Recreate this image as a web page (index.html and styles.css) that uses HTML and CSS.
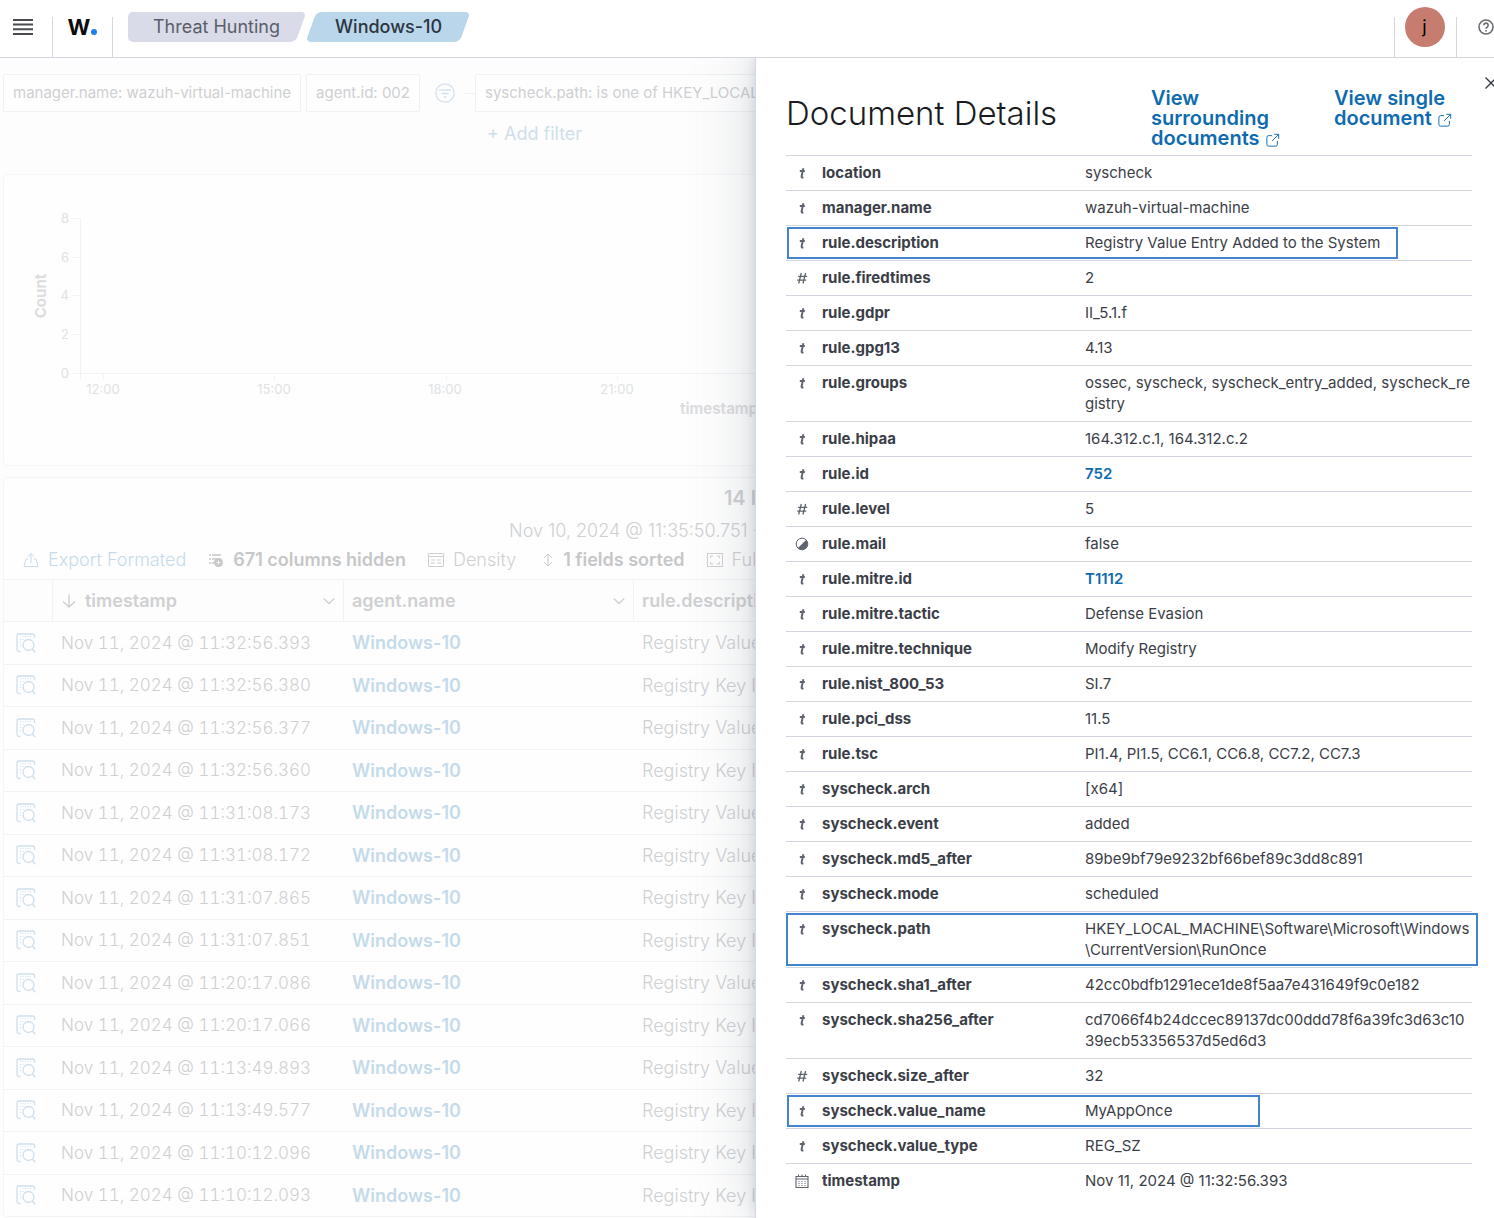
FILE: index.html
```html
<!DOCTYPE html>
<html lang="en">
<head>
<meta charset="utf-8">
<meta name="viewport" content="width=device-width, initial-scale=1">
<title>Threat Hunting - Windows-10</title>
<link rel="stylesheet" href="styles.css">
</head>
<body>
<svg class="sprite" aria-hidden="true">
  <symbol id="i-popout" viewBox="0 0 16 16"><path d="M7 3H3a2 2 0 0 0-2 2v8a2 2 0 0 0 2 2h8a2 2 0 0 0 2-2V9M9.500 1.500h5v5M14.500 1.500 7 9" fill="none" stroke="currentColor" stroke-width="1.100"/></symbol>
  <symbol id="i-string" viewBox="0 0 16 16"><path d="M9.400 3.200 7.600 11.200q-.4 1.700 1.800 1.100M5.800 6h5" fill="none" stroke="currentColor" stroke-width="1.900"/></symbol>
  <symbol id="i-number" viewBox="0 0 16 16"><path d="M7.300 3 4.700 13.500M11.600 3 9 13.500M4.200 6.300h9M3.200 10.200h9" fill="none" stroke="currentColor" stroke-width="1.300"/></symbol>
  <symbol id="i-boolean" viewBox="0 0 16 16"><circle cx="8" cy="8" r="5.800" fill="none" stroke="currentColor" stroke-width="1"/><path d="M12.100 3.900A5.800 5.800 0 0 1 3.900 12.100Z" fill="currentColor"/></symbol>
  <symbol id="i-date" viewBox="0 0 16 16"><path d="M2 3.500h12v11H2zM2 6h12M4.500 1.500v2M8 1.500v2M11.500 1.500v2" fill="none" stroke="currentColor" stroke-width="1.100"/><path d="M4.500 8.500h7M4.500 10.500h7M4.500 12.500h7" fill="none" stroke="currentColor" stroke-dasharray="1 2"/></symbol>
  <symbol id="i-inspect" viewBox="0 0 20 20"><path d="M4.500 18.500H3a2 2 0 0 1-2-2V3a2 2 0 0 1 2-2h13.500a2 2 0 0 1 2 2v2" fill="none" stroke="currentColor" stroke-width="1.300"/><path d="M4 3.600h12M4 6.500h4M4 9.500h2M4 12.500h2" fill="none" stroke="currentColor" stroke-dasharray="1 1.500"/><circle cx="12.500" cy="12" r="5.500" fill="none" stroke="currentColor" stroke-width="1.300"/><path d="m16.300 16 3 3.300" stroke="currentColor" stroke-width="1.400"/></symbol>
  <symbol id="i-chevron" viewBox="0 0 12 12"><path d="m.7 3.500 5.300 5 5.300-5" fill="none" stroke="currentColor" stroke-width="1.300"/></symbol>
</svg>

<header class="topbar">
  <button class="menu" aria-label="Toggle navigation"><svg width="20" height="16" viewBox="0 0 20 16"><path d="M0 1h20M0 5.500h20M0 10.200h20M0 15h20" stroke="#4a4c52" stroke-width="2"/></svg></button>
  <a class="logo" href="#" aria-label="Wazuh">W<span class="dot"></span></a>
  <nav class="crumbs" aria-label="Breadcrumbs">
    <a class="crumb crumb-first" href="#"><span>Threat Hunting</span></a>
    <a class="crumb crumb-last" href="#" aria-current="page"><span>Windows-10</span></a>
  </nav>
  <button class="account" aria-label="Account menu"><span class="avatar">j</span></button>
  <button class="help" aria-label="Help"><svg width="16" height="16" viewBox="0 0 16 16"><circle cx="8" cy="8" r="7" fill="none" stroke="#6a6c72" stroke-width="1.600"/><path d="M5.800 6.300a2.200 2.200 0 1 1 3.300 1.900Q8 8.800 8 9.800M8 11v1.600" fill="none" stroke="#6a6c72" stroke-width="1.600"/></svg></button>
</header>

<div class="layout">
<main class="pane">
<div class="workspace">
  <div class="filters">
    <span class="pill">manager.name: wazuh-virtual-machine</span>
    <span class="pill">agent.id: 002</span>
    <button class="filter-menu" aria-label="Filter options"><svg width="20" height="20" viewBox="0 0 20 20"><circle cx="10" cy="10" r="9.200" fill="none" stroke="currentColor" stroke-width="1.300"/><path d="M4 7h12M6.500 10.400h7M8.800 13.800h2.400" stroke="currentColor" stroke-width="1.500"/></svg></button>
    <span class="dash"></span>
    <span class="pill">syscheck.path: is one of HKEY_LOCAL_MACHINE</span>
  </div>
  <button class="add-filter">+ Add filter</button>

  <section class="panel chart" aria-label="Events over time">
    <svg width="100%" height="290">
      <g class="axis">
        <path d="M76.500 43V199M69 43.500h8M69 82.500h8M69 120.500h8M69 159.500h8M69 198.500h1430M76.500 198v6M99.500 198v6M270.500 201v4M442.500 201v4M613.500 201v4"/>
      </g>
      <g class="ticks end"><text x="65" y="48">8</text><text x="65" y="87">6</text><text x="65" y="125">4</text><text x="65" y="164">2</text><text x="65" y="203">0</text></g>
      <g class="ticks mid"><text x="99" y="219">12:00</text><text x="270" y="219">15:00</text><text x="441" y="219">18:00</text><text x="613" y="219">21:00</text></g>
      <text class="axis-title" transform="translate(42 121) rotate(-90)">Count</text>
      <text class="axis-title" x="715" y="239">timestamp</text>
    </svg>
  </section>

  <section class="panel" aria-label="Events">
    <h2 class="hits">14 hits</h2>
    <p class="range">Nov 10, 2024 @ 11:35:50.751 - Nov 11, 2024 @ 11:35:50.751</p>
    <div class="toolbar">
      <button class="tool tool-link"><svg width="16" height="16" viewBox="0 0 16 16"><path d="M5 7H3L1 14.500h14L13 7h-2M8 11V2M5 4.500 8 1.500l3 3" fill="none" stroke="currentColor"/></svg>Export Formated</button>
      <button class="tool tool-on"><svg width="16" height="16" viewBox="0 0 16 16"><path d="M1 3h2M1 7h2M1 11h2M4 3h9M4 7h5M4 11h2" stroke="currentColor" stroke-width="1.300"/><circle cx="10.500" cy="10.500" r="4.500" fill="currentColor"/><path d="M8.500 10.500h4M10.500 8.500v4" stroke="#fefefe"/></svg>671 columns hidden</button>
      <button class="tool"><svg width="16" height="16" viewBox="0 0 16 16"><path d="M.5 1.500h15v13H.5zM.5 4.500h15M3 8h4M9 8h4M3 11h4M9 11h4" fill="none" stroke="currentColor"/></svg>Density</button>
      <button class="tool tool-on tool-sort"><svg width="12" height="16" viewBox="0 0 12 16"><path d="M6 2v12M2 6 6 2l4 4M2 10l4 4 4-4" fill="none" stroke="currentColor"/></svg>1 fields sorted</button>
      <button class="tool"><svg width="16" height="16" viewBox="0 0 16 16"><path d="M.5 1.500h15v13H.5zM3.500 6V4h2.500M10 4h2.500v2M12.500 10v2H10M6 12H3.500v-2" fill="none" stroke="currentColor"/></svg>Full screen</button>
    </div>
    <table class="events">
      <colgroup><col class="c-icon"><col class="c-time"><col class="c-agent"><col></colgroup>
      <thead><tr>
        <th></th>
        <th><div class="head"><svg width="16" height="16" viewBox="0 0 16 16"><path d="M8 1.500v12.500M2 8.500 8 14l6-5.500" fill="none" stroke="currentColor" stroke-width="1.400"/></svg><span>timestamp</span><svg class="caret" width="12" height="12"><use href="#i-chevron"/></svg></div></th>
        <th><div class="head"><span>agent.name</span><svg class="caret" width="12" height="12"><use href="#i-chevron"/></svg></div></th>
        <th><div class="head"><span>rule.description</span></div></th>
      </tr></thead>
      <tbody>
        <tr><td><svg class="inspect"><use href="#i-inspect"/></svg></td><td class="time">Nov 11, 2024 @ 11:32:56.393</td><td><a href="#">Windows-10</a></td><td>Registry Value Entry</td></tr>
        <tr><td><svg class="inspect"><use href="#i-inspect"/></svg></td><td class="time">Nov 11, 2024 @ 11:32:56.380</td><td><a href="#">Windows-10</a></td><td>Registry Key Integrity</td></tr>
        <tr><td><svg class="inspect"><use href="#i-inspect"/></svg></td><td class="time">Nov 11, 2024 @ 11:32:56.377</td><td><a href="#">Windows-10</a></td><td>Registry Value Entry</td></tr>
        <tr><td><svg class="inspect"><use href="#i-inspect"/></svg></td><td class="time">Nov 11, 2024 @ 11:32:56.360</td><td><a href="#">Windows-10</a></td><td>Registry Key Integrity</td></tr>
        <tr><td><svg class="inspect"><use href="#i-inspect"/></svg></td><td class="time">Nov 11, 2024 @ 11:31:08.173</td><td><a href="#">Windows-10</a></td><td>Registry Value Entry</td></tr>
        <tr><td><svg class="inspect"><use href="#i-inspect"/></svg></td><td class="time">Nov 11, 2024 @ 11:31:08.172</td><td><a href="#">Windows-10</a></td><td>Registry Value Entry</td></tr>
        <tr><td><svg class="inspect"><use href="#i-inspect"/></svg></td><td class="time">Nov 11, 2024 @ 11:31:07.865</td><td><a href="#">Windows-10</a></td><td>Registry Key Integrity</td></tr>
        <tr><td><svg class="inspect"><use href="#i-inspect"/></svg></td><td class="time">Nov 11, 2024 @ 11:31:07.851</td><td><a href="#">Windows-10</a></td><td>Registry Key Integrity</td></tr>
        <tr><td><svg class="inspect"><use href="#i-inspect"/></svg></td><td class="time">Nov 11, 2024 @ 11:20:17.086</td><td><a href="#">Windows-10</a></td><td>Registry Value Entry</td></tr>
        <tr><td><svg class="inspect"><use href="#i-inspect"/></svg></td><td class="time">Nov 11, 2024 @ 11:20:17.066</td><td><a href="#">Windows-10</a></td><td>Registry Key Integrity</td></tr>
        <tr><td><svg class="inspect"><use href="#i-inspect"/></svg></td><td class="time">Nov 11, 2024 @ 11:13:49.893</td><td><a href="#">Windows-10</a></td><td>Registry Value Entry</td></tr>
        <tr><td><svg class="inspect"><use href="#i-inspect"/></svg></td><td class="time">Nov 11, 2024 @ 11:13:49.577</td><td><a href="#">Windows-10</a></td><td>Registry Key Integrity</td></tr>
        <tr><td><svg class="inspect"><use href="#i-inspect"/></svg></td><td class="time">Nov 11, 2024 @ 11:10:12.096</td><td><a href="#">Windows-10</a></td><td>Registry Key Integrity</td></tr>
        <tr><td><svg class="inspect"><use href="#i-inspect"/></svg></td><td class="time">Nov 11, 2024 @ 11:10:12.093</td><td><a href="#">Windows-10</a></td><td>Registry Key Integrity</td></tr>
      </tbody>
    </table>
  </section>
</div>
</main>

<aside class="flyout" aria-label="Document Details">
  <button class="close" aria-label="Close"><svg width="12" height="12" viewBox="0 0 12 12"><path d="m.5.5 11 11M11.500.5l-11 11" stroke="#343741" stroke-width="1.300"/></svg></button>
  <div class="flyout-head">
    <h1>Document Details</h1>
    <a href="#">View surrounding documents <svg width="14" height="14"><use href="#i-popout"/></svg></a>
    <a href="#">View single document <svg width="14" height="14"><use href="#i-popout"/></svg></a>
  </div>
  <table class="fields">
    <colgroup><col class="f-type"><col class="f-name"><col></colgroup>
    <tbody>
      <tr><td><svg><use href="#i-string"/></svg></td><th scope="row">location</th><td>syscheck</td></tr>
      <tr><td><svg><use href="#i-string"/></svg></td><th scope="row">manager.name</th><td>wazuh-virtual-machine</td></tr>
      <tr class="mark mark-wide"><td><svg><use href="#i-string"/></svg></td><th scope="row">rule.description</th><td>Registry Value Entry Added to the System</td></tr>
      <tr><td><svg><use href="#i-number"/></svg></td><th scope="row">rule.firedtimes</th><td>2</td></tr>
      <tr><td><svg><use href="#i-string"/></svg></td><th scope="row">rule.gdpr</th><td>II_5.1.f</td></tr>
      <tr><td><svg><use href="#i-string"/></svg></td><th scope="row">rule.gpg13</th><td>4.13</td></tr>
      <tr><td><svg><use href="#i-string"/></svg></td><th scope="row">rule.groups</th><td>ossec, syscheck, syscheck_entry_added, syscheck_registry</td></tr>
      <tr><td><svg><use href="#i-string"/></svg></td><th scope="row">rule.hipaa</th><td>164.312.c.1, 164.312.c.2</td></tr>
      <tr><td><svg><use href="#i-string"/></svg></td><th scope="row">rule.id</th><td><a href="#">752</a></td></tr>
      <tr><td><svg><use href="#i-number"/></svg></td><th scope="row">rule.level</th><td>5</td></tr>
      <tr><td><svg><use href="#i-boolean"/></svg></td><th scope="row">rule.mail</th><td>false</td></tr>
      <tr><td><svg><use href="#i-string"/></svg></td><th scope="row">rule.mitre.id</th><td><a href="#">T1112</a></td></tr>
      <tr><td><svg><use href="#i-string"/></svg></td><th scope="row">rule.mitre.tactic</th><td>Defense Evasion</td></tr>
      <tr><td><svg><use href="#i-string"/></svg></td><th scope="row">rule.mitre.technique</th><td>Modify Registry</td></tr>
      <tr><td><svg><use href="#i-string"/></svg></td><th scope="row">rule.nist_800_53</th><td>SI.7</td></tr>
      <tr><td><svg><use href="#i-string"/></svg></td><th scope="row">rule.pci_dss</th><td>11.5</td></tr>
      <tr><td><svg><use href="#i-string"/></svg></td><th scope="row">rule.tsc</th><td>PI1.4, PI1.5, CC6.1, CC6.8, CC7.2, CC7.3</td></tr>
      <tr><td><svg><use href="#i-string"/></svg></td><th scope="row">syscheck.arch</th><td>[x64]</td></tr>
      <tr><td><svg><use href="#i-string"/></svg></td><th scope="row">syscheck.event</th><td>added</td></tr>
      <tr><td><svg><use href="#i-string"/></svg></td><th scope="row">syscheck.md5_after</th><td>89be9bf79e9232bf66bef89c3dd8c891</td></tr>
      <tr><td><svg><use href="#i-string"/></svg></td><th scope="row">syscheck.mode</th><td>scheduled</td></tr>
      <tr class="mark mark-full"><td><svg><use href="#i-string"/></svg></td><th scope="row">syscheck.path</th><td>HKEY_LOCAL_MACHINE\Software\Microsoft\Windows\CurrentVersion\RunOnce</td></tr>
      <tr><td><svg><use href="#i-string"/></svg></td><th scope="row">syscheck.sha1_after</th><td>42cc0bdfb1291ece1de8f5aa7e431649f9c0e182</td></tr>
      <tr><td><svg><use href="#i-string"/></svg></td><th scope="row">syscheck.sha256_after</th><td>cd7066f4b24dccec89137dc00ddd78f6a39fc3d63c1039ecb53356537d5ed6d3</td></tr>
      <tr><td><svg><use href="#i-number"/></svg></td><th scope="row">syscheck.size_after</th><td>32</td></tr>
      <tr class="mark mark-short"><td><svg><use href="#i-string"/></svg></td><th scope="row">syscheck.value_name</th><td>MyAppOnce</td></tr>
      <tr><td><svg><use href="#i-string"/></svg></td><th scope="row">syscheck.value_type</th><td>REG_SZ</td></tr>
      <tr><td><svg><use href="#i-date"/></svg></td><th scope="row">timestamp</th><td>Nov 11, 2024 @ 11:32:56.393</td></tr>
    </tbody>
  </table>
</aside>
</div>
</body>
</html>
```
FILE: styles.css
```css
*, *::before, *::after { box-sizing: border-box; }
body {
  margin: 0;
  min-height: 100vh;
  display: flex;
  flex-direction: column;
  background: #fff;
  color: #3b3e47;
  font-family: Inter, "Liberation Sans", sans-serif;
  font-size: 15px;
  overflow-x: hidden;
}
button { font: inherit; color: inherit; background: none; border: 0; padding: 0; margin: 0; text-align: left; }
a { text-decoration: none; }
h1, h2, p { margin: 0; }
svg { flex: none; }
.sprite { position: absolute; width: 0; height: 0; }

/* top bar */
.topbar { display: flex; align-items: flex-end; height: 58px; border-bottom: 1px solid #d3d6df; }
.menu { display: flex; justify-content: center; align-items: flex-start; width: 52px; height: 40px; padding: 2px 6px 0 0; }
.logo { display: flex; align-items: flex-start; justify-content: center; gap: 1px; height: 40px; width: 61px; border: solid #d3d6df; border-width: 0 1px; color: #0b0b0b; font-size: 22px; font-weight: 700; line-height: 20px; }
.dot { width: 6px; height: 6px; margin-top: 12px; border-radius: 50%; background: #1d7ff0; }
.crumbs { display: flex; align-self: flex-start; gap: 10px; flex: 1; padding: 12px 0 0 15px; font-size: 18px; line-height: 30px; }
.crumb { position: relative; color: #5a5e69; }
.crumb span { position: relative; }
.crumb::before, .crumb-first::after { content: ""; position: absolute; inset: 0; border-radius: 5px; background: #d9dce8; }
.crumb::before { transform: skewX(-20deg); }
.crumb-first { padding: 0 21px 0 25px; }
.crumb-first::before { left: 20px; }
.crumb-first::after { right: 20px; }
.crumb-first span { z-index: 1; }
.crumb-last { padding: 0 23px 0 24px; color: #2b3440; }
.crumb-last span { font-weight: 500; }
.crumb-last::before { background: #b9d6ea; }
.account { display: flex; justify-content: center; width: 63px; height: 40px; padding-right: 2px; border: solid #d3d6df; border-width: 0 1px; }
.avatar { width: 40px; height: 40px; margin-top: -10px; border-radius: 50%; background: #c67c6f; color: #000; font-size: 18px; line-height: 40px; text-align: center; }
.help { display: flex; width: 37px; height: 40px; padding: 2px 0 0 21px; }

.layout { flex: 1; display: grid; grid-template-columns: 755fr 739fr; }

/* dimmed background page */
.pane { min-width: 0; overflow: hidden; background: #fdfdfd; color: #cfd0d2; font-size: 18px; }
.workspace { width: 200%; padding: 16px 3px 0; }
.filters { display: flex; align-items: center; gap: 5px; font-size: 15px; }
.pill { height: 38px; padding: 0 9px; border: 1px solid #eff1f3; border-radius: 2px; background: #fefefe; line-height: 36px; white-space: nowrap; }
.filter-menu { display: flex; margin: 0 5px 0 10px; color: #d5e2ed; }
.dash { width: 10px; height: 1px; margin-right: -5px; background: #eff1f3; }
.add-filter { display: block; margin: 12px 0 30px 484px; line-height: 20px; color: #cfdfea; }
.panel { border: 1px solid #f3f5f6; border-radius: 4px; background: #fefefe; }
.chart { margin-bottom: 11px; }
.chart svg { display: block; }
.axis { fill: none; stroke: #f1f2f3; }
.ticks { fill: #e0e2e3; font-size: 13px; }
.end { text-anchor: end; }
.mid { text-anchor: middle; }
.axis-title { fill: #dcdddf; font-size: 15px; font-weight: 700; text-anchor: middle; }
.hits { margin-top: 5px; font-size: 20px; font-weight: 600; line-height: 30px; text-align: center; }
.range { line-height: 36px; text-align: center; font-weight: 300; }
.toolbar { display: flex; gap: 22px; height: 30px; padding-left: 19px; line-height: 22px; font-weight: 300; white-space: nowrap; }
.tool { display: flex; align-items: center; gap: 9px; height: 22px; }
.tool-link { color: #c5dbea; }
.tool-on { font-weight: 600; color: #c6c7c9; }
.tool-sort { padding-left: 4px; }
.events { width: 100%; table-layout: fixed; border-collapse: separate; border-spacing: 0; }
.c-icon { width: 49px; }
.c-time { width: 291px; }
.c-agent { width: 290px; }
.events th { height: 42px; padding: 0 8px; border-top: 1px solid #f0f3f5; border-right: 1px solid #f0f3f5; background: #fdfdfd; text-align: left; font-weight: 600; }
.events td { height: 43px; padding: 0 8px 1px; border-top: 1px solid #f0f3f5; font-weight: 300; white-space: nowrap; }
.events tr:nth-child(even) td { height: 42px; }
.events td:first-child { padding-left: 12px; }
.events .time { font-size: 17px; font-variant-numeric: tabular-nums; }
.events a { color: #c5dbea; font-weight: 600; }
.head { display: flex; align-items: center; gap: 8px; }
.caret { margin-left: auto; }
.inspect { display: block; width: 20px; height: 20px; color: #cfdfeb; }

/* document flyout */
.flyout { position: relative; min-width: 0; padding: 30px 22px 20px 30px; background: #fff; border-left: 1px solid #d3dae6; box-shadow: 0 0 60px rgba(100, 110, 130, .25), 0 0 12px rgba(100, 110, 130, .25); clip-path: inset(0 0 0 -90px); }
.close { position: absolute; top: 19px; right: -3px; display: flex; }
.flyout-head { display: grid; grid-template-columns: 365fr 183fr 138fr; margin-bottom: 7px; }
.flyout-head h1 { font-size: 33px; font-weight: 300; line-height: 50px; color: #1a1c21; white-space: nowrap; }
.flyout-head a { max-width: 150px; font-size: 20px; line-height: 20px; font-weight: 600; color: #0e6bb0; }
.flyout-head a svg { margin-left: 1px; vertical-align: -2px; }
.fields { width: 100%; table-layout: fixed; border-collapse: separate; border-spacing: 0; line-height: 21px; }
.f-type { width: 29px; }
.f-name { width: 263px; }
.fields td, .fields th { padding: 6px 0 7px 7px; border-top: 1px solid #d3d6df; vertical-align: top; text-align: left; word-break: break-all; }
.fields th { font-weight: 700; }
.fields td:first-child { padding-left: 8px; }
.fields svg { display: block; width: 16px; height: 16px; margin-top: 3px; color: #5f636e; }
.fields a { color: #0e6bb0; font-weight: 600; }

.mark { position: relative; }
.mark th::after { content: ""; position: absolute; top: 2px; bottom: 1px; left: 1px; border: 2px solid #4484cf; }
.mark-wide th::after { width: 89%; }
.mark-full th::after { left: 0; right: -6px; }
.mark-short th::after { width: 69%; }
```
